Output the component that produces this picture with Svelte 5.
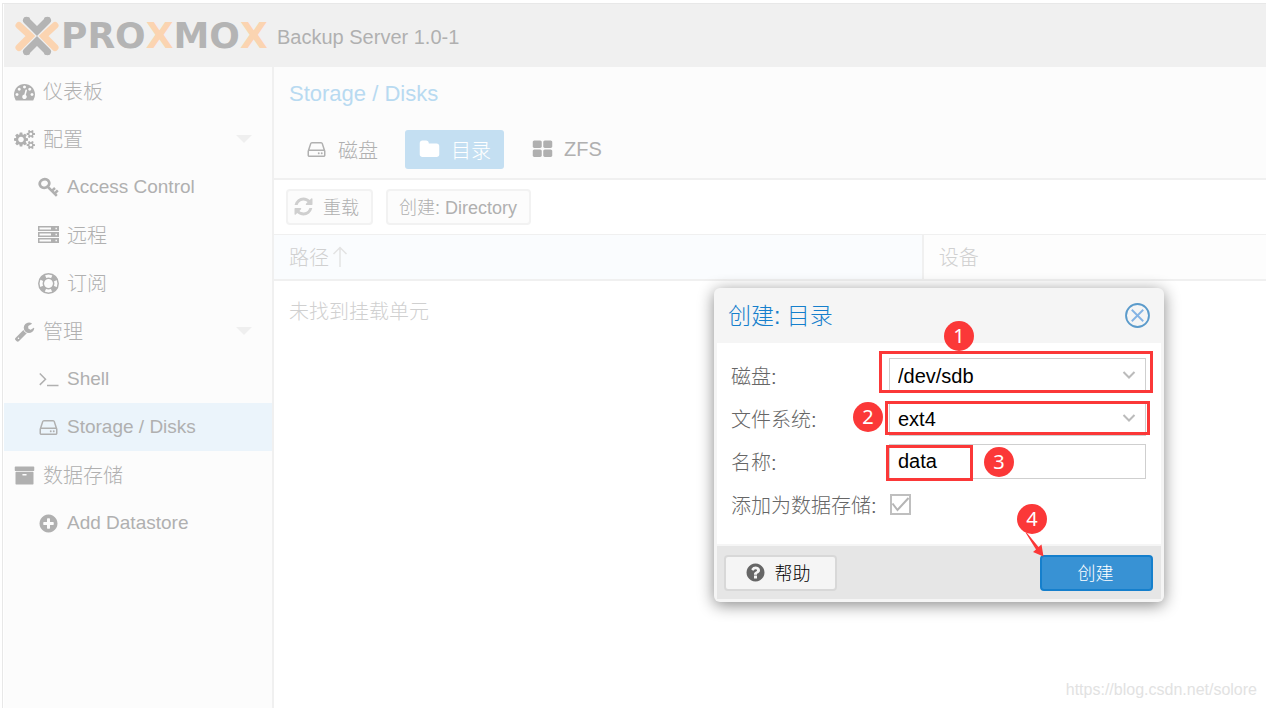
<script>
  const icons = {
    dashboard:
      'M384 1152q0-53-37.5-90.5t-90.5-37.5-90.5 37.5-37.5 90.5 37.5 90.5 90.5 37.5 90.5-37.5 37.5-90.5zm192-448q0-53-37.5-90.5t-90.5-37.5-90.5 37.5-37.5 90.5 37.5 90.5 90.5 37.5 90.5-37.5 37.5-90.5zm428 481l101-382q6-26-7.5-48.5t-38.5-29.5-48 6.5-30 39.5l-101 382q-60 5-107 43.5t-63 98.5q-20 77 20 146t117 89 146-20 89-117q16-60-6-117t-72-91zm660-33q0-53-37.5-90.5t-90.5-37.5-90.5 37.5-37.5 90.5 37.5 90.5 90.5 37.5 90.5-37.5 37.5-90.5zm-640-640q0-53-37.5-90.5t-90.5-37.5-90.5 37.5-37.5 90.5 37.5 90.5 90.5 37.5 90.5-37.5 37.5-90.5zm448 192q0-53-37.5-90.5t-90.5-37.5-90.5 37.5-37.5 90.5 37.5 90.5 90.5 37.5 90.5-37.5 37.5-90.5zm320 448q0 261-141 483-19 29-54 29h-1402q-35 0-54-29-141-221-141-483 0-182 71-348t191-286 286-191 348-71 348 71 286 191 191 286 71 348z',
    cogs: 'M896 896q0-106-75-181t-181-75-181 75-75 181 75 181 181 75 181-75 75-181zm768 512q0-52-38-90t-90-38-90 38-38 90q0 53 37.5 90.5t90.5 37.5 90.5-37.5 37.5-90.5zm0-1024q0-52-38-90t-90-38-90 38-38 90q0 53 37.5 90.5t90.5 37.5 90.5-37.5 37.5-90.5zm-384 421v185q0 10-7 19.5t-16 10.5l-155 24q-11 35-32 76 34 48 90 115 7 11 7 20 0 12-7 19-23 30-82.5 89.5t-78.5 59.5q-11 0-21-7l-115-90q-37 19-77 31-11 108-23 155-7 24-30 24h-186q-11 0-20-7.5t-10-17.5l-23-153q-34-10-75-31l-118 89q-7 7-20 7-11 0-21-8-144-133-144-160 0-9 7-19 10-14 41-53t47-61q-23-44-35-82l-152-24q-10-1-17-9.5t-7-19.5v-185q0-10 7-19.5t16-10.5l155-24q11-35 32-76-34-48-90-115-7-11-7-20 0-12 7-20 22-30 82-89t79-59q11 0 21 7l115 90q34-18 77-32 11-108 23-154 7-24 30-24h186q11 0 20 7.5t10 17.5l23 153q34 10 75 31l118-89q8-7 20-7 11 0 21 8 144 133 144 160 0 8-7 19-12 16-42 54t-45 60q23 48 34 82l152 23q10 2 17 10.5t7 19.5zm640 533v140q0 16-149 31-12 27-30 52 51 113 51 138 0 4-4 7-122 71-124 71-8 0-46-47t-52-68q-20 2-30 2t-30-2q-14 21-52 68t-46 47q-2 0-124-71-4-3-4-7 0-25 51-138-18-25-30-52-149-15-149-31v-140q0-16 149-31 13-29 30-52-51-113-51-138 0-4 4-7 4-2 35-20t59-34 30-16q8 0 46 46.500t52 67.500q20-2 30-2t30 2q51-71 92-112l6-2q4 0 124 70 4 3 4 7 0 25-51 138 17 23 30 52 149 15 149 31zm0-1024v140q0 16-149 31-12 27-30 52 51 113 51 138 0 4-4 7-122 71-124 71-8 0-46-47t-52-68q-20 2-30 2t-30-2q-14 21-52 68t-46 47q-2 0-124-71-4-3-4-7 0-25 51-138-18-25-30-52-149-15-149-31v-140q0-16 149-31 13-29 30-52-51-113-51-138 0-4 4-7 4-2 35-20t59-34 30-16q8 0 46 46.500t52 67.500q20-2 30-2t30 2q51-71 92-112l6-2q4 0 124 70 4 3 4 7 0 25-51 138 17 23 30 52 149 15 149 31z',
    wrench:
      'M448 1472q0-26-19-45t-45-19-45 19-19 45 19 45 45 19 45-19 19-45zm644-420l-682 682q-37 37-90 37-52 0-91-37l-106-108q-38-36-38-90 0-53 38-91l681-681q39 98 114.5 173.5t173.5 114.5zm634-435q0 39-23 106-47 134-164.5 217.5t-258.5 83.5q-185 0-316.5-131.5t-131.5-316.5 131.5-316.5 316.5-131.5q58 0 121.5 16.500t107.5 46.500q16 11 16 28t-16 28l-293 169v224l193 107q5-3 79-48.500t135.500-81 70.500-35.500q15 0 23.500 10t8.500 25z',
    hdd: 'M1168 1216q0 33-23.500 56.500t-56.500 23.500-56.500-23.500-23.500-56.500 23.500-56.500 56.500-23.500 56.500 23.500 23.500 56.500zm256 0q0 33-23.500 56.500t-56.500 23.500-56.500-23.500-23.500-56.500 23.500-56.500 56.500-23.500 56.500 23.500 23.500 56.500zm112 160v-320q0-13-9.500-22.500t-22.500-9.500h-1216q-13 0-22.500 9.500t-9.500 22.500v320q0 13 9.500 22.500t22.500 9.500h1216q13 0 22.500-9.500t9.500-22.500zm-1230-480h1180l-157-482q-4-13-16-21.500t-26-8.500h-782q-14 0-26 8.500t-16 21.500zm1358 160v320q0 66-47 113t-113 47h-1216q-66 0-113-47t-47-113v-320q0-25 16-75l197-606q17-53 63-86t101-33h782q55 0 101 33t63 86l197 606q16 50 16 75z',
    plus: 'M1344 960v-128q0-26-19-45t-45-19h-256v-256q0-26-19-45t-45-19h-128q-26 0-45 19t-19 45v256h-256q-26 0-45 19t-19 45v128q0 26 19 45t45 19h256v256q0 26 19 45t45 19h128q26 0 45-19t19-45v-256h256q26 0 45-19t19-45zm320-64q0 209-103 385.500t-279.500 279.500-385.500 103-385.500-103-279.500-279.500-103-385.500 103-385.500 279.500-279.500 385.500-103 385.500 103 279.500 279.500 103 385.500z',
    help: 'M1024 1376v-192q0-14-9-23t-23-9h-192q-14 0-23 9t-9 23v192q0 14 9 23t23 9h192q14 0 23-9t9-23zm256-672q0-88-55.500-163t-138.500-116-170-41q-243 0-371 213-15 24 8 42l132 100q7 6 19 6 16 0 25-12 53-68 86-92 34-24 86-24 48 0 85.500 26t37.500 59q0 38-20 61t-68 45q-63 28-115.500 86.500t-52.500 125.500v36q0 14 9 23t23 9h192q14 0 23-9t9-23q0-19 21.500-49.500t54.500-49.500q32-18 49-28.500t46-35 44.500-48 28-60.500 12.500-81zm384 192q0 209-103 385.500t-279.500 279.500-385.500 103-385.500-103-279.500-279.500-103-385.500 103-385.500 279.500-279.500 385.500-103 385.500 103 279.500 279.500 103 385.500z',
    refresh:
      'M1639 1056q0 5-1 7-64 268-268 434.500t-478 166.500q-146 0-282.500-55t-243.500-157l-129 129q-19 19-45 19t-45-19-19-45v-448q0-26 19-45t45-19h448q26 0 45 19t19 45-19 45l-137 137q71 66 161 102t187 36q134 0 250-65t186-179q11-17 53-117 8-23 30-23h192q13 0 22.500 9.500t9.500 22.500zm25-800v448q0 26-19 45t-45 19h-448q-26 0-45-19t-19-45 19-45l138-138q-148-137-349-137-134 0-250 65t-186 179q-11 17-53 117-8 23-30 23h-199q-13 0-22.500-9.500t-9.500-22.500v-7q65-268 270-434.500t480-166.500q146 0 284 55.500t245 156.500l130-129q19-19 45-19t45 19 19 45z',
    folder:
      'M1728 608v704q0 92-66 158t-158 66h-1216q-92 0-158-66t-66-158v-960q0-92 66-158t158-66h320q92 0 158 66t66 158v32h672q92 0 158 66t66 158z',
    archive:
      'M1088 832q0-26-19-45t-45-19h-256q-26 0-45 19t-19 45 19 45 45 19h256q26 0 45-19t19-45zm576-192v960q0 26-19 45t-45 19h-1408q-26 0-45-19t-19-45v-960q0-26 19-45t45-19h1408q26 0 45 19t19 45zm64-448v256q0 26-19 45t-45 19h-1536q-26 0-45-19t-19-45v-256q0-26 19-45t45-19h1536q26 0 45 19t19 45z',
    grid: 'M832 1024v384q0 52-38 90t-90 38h-512q-52 0-90-38t-38-90v-384q0-52 38-90t90-38h512q52 0 90 38t38 90zm0-768v384q0 52-38 90t-90 38h-512q-52 0-90-38t-38-90v-384q0-52 38-90t90-38h512q52 0 90 38t38 90zm896 768v384q0 52-38 90t-90 38h-512q-52 0-90-38t-38-90v-384q0-52 38-90t90-38h512q52 0 90 38t38 90zm0-768v384q0 52-38 90t-90 38h-512q-52 0-90-38t-38-90v-384q0-52 38-90t90-38h512q52 0 90 38t38 90z'
  };

  const nav = [
    { label: '仪表板', icon: 'dashboard' },
    { label: '配置', icon: 'cogs', open: true },
    { label: 'Access Control', icon: 'key', child: true, latin: true },
    { label: '远程', icon: 'server', child: true },
    { label: '订阅', icon: 'ring', child: true },
    { label: '管理', icon: 'wrench', open: true },
    { label: 'Shell', icon: 'terminal', child: true, latin: true },
    { label: 'Storage / Disks', icon: 'hdd', child: true, latin: true, active: true },
    { label: '数据存储', icon: 'archive' },
    { label: 'Add Datastore', icon: 'plus', child: true, latin: true }
  ];

  let disk = $state('/dev/sdb');
  let filesystem = $state('ext4');
  let name = $state('data');
  let addDatastore = $state(true);
</script>

{#snippet icon(id)}
  {#if id === 'key'}
    <svg class="icon" viewBox="0 0 21 21" aria-hidden="true" fill="none" stroke="currentColor">
      <ellipse cx="6.500" cy="6.500" rx="4.800" ry="4.300" stroke-width="2.800" transform="rotate(-20 6.500 6.500)" />
      <path d="M9.500 9.500 18.800 18.800M13.600 14.200 17 11M16.200 17 19.800 13.400" stroke-width="2.500" />
    </svg>
  {:else if id === 'server'}
    <svg class="icon" viewBox="0 0 21 21" aria-hidden="true">
      <path
        fill="currentColor"
        fill-rule="evenodd"
        d="M0 1h21v5H0zM1.500 2.500v2H13v-2zM17.500 2.800v1.400h1.400V2.800zM0 7h21v5H0zM1.500 8.500v2H13v-2zM17.500 8.800v1.400h1.400V8.800zM0 13h21v5H0zM1.500 14.500v2H13v-2zM17.500 14.800v1.400h1.400v-1.400z"
      />
    </svg>
  {:else if id === 'ring'}
    <svg class="icon" viewBox="0 0 21 21" aria-hidden="true" fill="none" stroke="currentColor">
      <circle cx="10.500" cy="10.500" r="9.700" stroke-width="1.500" />
      <circle cx="10.500" cy="10.500" r="5.200" stroke-width="1.500" />
      <circle cx="10.500" cy="10.500" r="7.400" stroke-width="5" stroke-dasharray="5.400 6.224" stroke-dashoffset="-3.112" />
    </svg>
  {:else if id === 'terminal'}
    <svg class="icon" viewBox="0 0 21 21" aria-hidden="true" fill="none" stroke="currentColor" stroke-width="1.500">
      <path d="M1.800 4.500 7.500 10.200 1.800 15.900M9 16.500h11.500" />
    </svg>
  {:else}
    <svg class="icon" viewBox={id === 'cogs' ? '0 0 1920 1792' : '0 0 1792 1792'} aria-hidden="true">
      <path fill="currentColor" d={icons[id]} />
    </svg>
  {/if}
{/snippet}

<div class="app">
  <header class="topbar">
    <svg class="emblem" viewBox="0 0 44 40" aria-hidden="true" fill="none" stroke-width="7" stroke-linecap="round">
      <path stroke="#fbd4b1" d="M4 9.500 15.500 20 4 31.500M40 9.500 28.500 20 40 31.500" />
      <path stroke="#f0f0f0" stroke-width="8.500" d="M11.500 4.500 22 15.500 32.500 4.500M11.500 35.500 22 24.500 32.500 35.500" />
      <path stroke="#b4b4b4" d="M11.500 4.500 22 15 32.500 4.500M11.500 35.500 22 25 32.500 35.500" />
      <path stroke="#b4b4b4" stroke-width="4" d="M10.500 3H13M31 3H33.500M10.500 37H13M31 37H33.500" />
    </svg>
    <span class="wordmark">PRO<b>X</b>MO<b>X</b></span>
    <span class="version">Backup Server 1.0-1</span>
  </header>

  <div class="columns">
    <nav class="sidebar">
      {#each nav as item}
        <a href="#nav" class:child={item.child} class:latin={item.latin} class:active={item.active}>
          {@render icon(item.icon)}
          <span>{item.label}</span>
          {#if item.open}<i class="caret"></i>{/if}
        </a>
      {/each}
    </nav>

    <main>
      <section class="heading">
        <h1>Storage / Disks</h1>
        <div class="tabs">
          <button class="tab">{@render icon('hdd')}磁盘</button>
          <button class="tab selected">{@render icon('folder')}目录</button>
          <button class="tab">{@render icon('grid')}ZFS</button>
        </div>
      </section>

      <div class="toolbar">
        <button class="tool reload">{@render icon('refresh')}重载</button>
        <button class="tool">创建: Directory</button>
      </div>

      <table>
        <thead>
          <tr>
            <th class="path">
              <span>路径</span><svg class="sort" viewBox="0 0 16 22" aria-hidden="true" fill="none" stroke="#e3e3e3" stroke-width="1.500">
                <path d="M8 21V2M1.500 8 8 1.500 14.500 8" />
              </svg>
            </th>
            <th>设备</th>
          </tr>
        </thead>
        <tbody>
          <tr><td colspan="2">未找到挂载单元</td></tr>
        </tbody>
      </table>
    </main>
  </div>

  <div class="dialog" role="dialog" aria-labelledby="dialog-title">
    <div class="dialog-head">
      <h2 id="dialog-title">创建: 目录</h2>
      <button class="close" aria-label="关闭">
        <svg viewBox="0 0 24 24" aria-hidden="true" fill="none">
          <circle cx="12" cy="12" r="11" stroke="#5b9bcb" stroke-width="1.800" />
          <path d="M6.500 6.500l11 11M17.500 6.500l-11 11" stroke="#84b3e4" stroke-width="1.800" />
        </svg>
      </button>
    </div>

    <form class="dialog-body">
      <label for="disk">磁盘:</label>
      <div class="combo">
        <select id="disk" bind:value={disk}><option>/dev/sdb</option></select>
        <svg viewBox="0 0 14 10" aria-hidden="true"><path d="M1.500 2 7 7.500 12.500 2" /></svg>
      </div>

      <label for="fs">文件系统:</label>
      <div class="combo">
        <select id="fs" bind:value={filesystem}><option>ext4</option></select>
        <svg viewBox="0 0 14 10" aria-hidden="true"><path d="M1.500 2 7 7.500 12.500 2" /></svg>
      </div>

      <label for="name">名称:</label>
      <input id="name" type="text" bind:value={name} />

      <label for="add">添加为数据存储:</label>
      <div class="check">
        <input id="add" type="checkbox" bind:checked={addDatastore} />
        {#if addDatastore}
          <svg viewBox="0 0 21 21" aria-hidden="true"><path d="M2.500 9.500 7.500 16 18.500 4" /></svg>
        {/if}
      </div>
    </form>

    <div class="dialog-foot">
      <button class="help">{@render icon('help')}帮助</button>
      <button class="create">创建</button>
    </div>

    <i class="mark mark-disk"></i>
    <i class="mark mark-fs"></i>
    <i class="mark mark-name"></i>
    <span class="step step-1">1</span>
    <span class="step step-2">2</span>
    <span class="step step-3">3</span>
    <span class="step step-4">4</span>
    <svg class="arrow" viewBox="0 0 20 26" aria-hidden="true">
      <path fill="#fb3838" d="M1.500 1.500 3 2 14.500 16 17.500 13.500 19.500 25.500 9 21 12 18.500z" />
    </svg>
  </div>

  <span class="watermark">https://blog.csdn.net/solore</span>
</div>

<style>
  :global(body) {
    background: #fff;
  }

  .app {
    --sans: 'Liberation Sans', 'Noto Sans CJK SC', sans-serif;
    position: relative;
    display: flex;
    flex-direction: column;
    box-sizing: border-box;
    min-height: 100vh;
    padding: 3px 0 0 2px;
    font-family: var(--sans);
    font-size: 20px;
    font-weight: 300;
    color: #b0b0b0;
    overflow: hidden;
  }

  button,
  select,
  input {
    font: inherit;
    margin: 0;
  }

  .icon {
    flex: none;
    width: 21px;
    height: 21px;
  }

  .topbar {
    display: flex;
    align-items: center;
    height: 63px;
    border: solid #e8e8e8;
    border-width: 1px 0 0 1px;
    box-shadow: inset 1px 0 #fff;
    padding-left: 12px;
    background: #f0f0f0;
  }

  .emblem {
    width: 44px;
    height: 40px;
  }

  .wordmark {
    margin-left: 2px;
    width: 206px;
    font: bold 36px/40px 'DejaVu Sans', sans-serif;
    color: #b4b4b4;
  }

  .wordmark b {
    color: #fbd4b1;
  }

  .version {
    margin-left: 10px;
    padding-top: 3px;
    white-space: nowrap;
  }

  .columns {
    flex: 1;
    display: flex;
    border-left: 1px solid #e8e8e8;
    padding-left: 1px;
  }

  .sidebar {
    flex: none;
    width: 268px;
    border-right: 2px solid #f0f0f0;
    background: #fcfcfc;
  }

  .sidebar a {
    display: flex;
    align-items: center;
    gap: 8px;
    height: 48px;
    padding: 0 20px 0 10px;
    color: inherit;
    text-decoration: none;
  }

  .sidebar a span {
    padding-bottom: 2px;
  }

  .sidebar a.latin span {
    padding-bottom: 0;
    font-size: 19px;
  }

  .sidebar a.child {
    padding-left: 34px;
  }

  .sidebar a.active {
    background: #ebf4fb;
  }

  .caret {
    margin-left: auto;
    border: 8px solid transparent;
    border-top-color: #efefef;
    border-bottom-width: 0;
  }

  main {
    flex: 1;
    min-width: 0;
  }

  .heading {
    padding: 12px 15px 9px;
    border-bottom: 2px solid #f0f0f0;
    background: #fcfcfc;
  }

  h1 {
    margin: 0;
    font-size: 22px;
    line-height: 30px;
    font-weight: 400;
    color: #b8daf1;
  }

  .tabs {
    display: flex;
    gap: 14px;
    margin-top: 21px;
  }

  .tab {
    display: flex;
    align-items: center;
    gap: 11px;
    height: 39px;
    padding: 0 13px 0 14px;
    border: 0;
    border-radius: 3px;
    background: none;
    color: #b0b0b0;
  }

  .tab:first-child {
    padding-left: 17px;
  }

  .tab.selected {
    background: #c4dff2;
    color: #fff;
  }

  .toolbar {
    display: flex;
    gap: 13px;
    padding: 9px 12px;
    border-bottom: 1px solid #f0f0f0;
  }

  .tool {
    display: flex;
    align-items: center;
    gap: 9px;
    height: 36px;
    padding: 0 12px 2px 11px;
    border: 2px solid #f2f2f2;
    border-radius: 4px;
    background: #fcfcfc;
    font-size: 18px;
    color: #b0b0b0;
  }

  .reload {
    padding-left: 5px;
  }

  .reload .icon {
    color: #cfcfcf;
  }

  table {
    width: 100%;
    border-collapse: separate;
    border-spacing: 0;
    color: #d0d0d0;
  }

  th {
    height: 42px;
    padding: 0 15px 2px;
    border-bottom: 2px solid #f0f0f0;
    background: #fdfdfd;
    font-weight: 300;
    text-align: left;
    vertical-align: middle;
  }

  th.path {
    width: 65.5%;
    box-sizing: border-box;
    height: 46px;
    border-right: 2px solid #f0f0f0;
    background: #fafcfe;
  }

  .sort {
    width: 16px;
    height: 22px;
    margin-left: 3px;
    vertical-align: -3px;
  }

  td {
    height: 58px;
    padding: 0 15px 2px;
  }

  .dialog {
    position: absolute;
    left: 714px;
    top: 288px;
    width: 450px;
    box-sizing: border-box;
    padding: 0 3px 3px;
    border-radius: 6px;
    background: #f5f5f5;
    box-shadow: 0 3px 16px #888;
    color: #666;
  }

  .dialog-head {
    display: flex;
    align-items: center;
    justify-content: space-between;
    height: 55px;
    padding: 0 11px;
  }

  h2 {
    margin: 0;
    padding-bottom: 4px;
    font-size: 23px;
    font-weight: 300;
    color: #157fcc;
  }

  .close {
    width: 25px;
    height: 25px;
    padding: 0;
    border: 0;
    background: none;
  }

  .close svg {
    display: block;
  }

  .dialog-body {
    display: grid;
    grid-template-columns: 158px 1fr;
    grid-auto-rows: 35px;
    row-gap: 8px;
    align-items: center;
    padding: 15px 15px 22px 14px;
    background: #fff;
  }

  label {
    white-space: nowrap;
  }

  .combo {
    position: relative;
  }

  select,
  input[type='text'] {
    display: block;
    width: 100%;
    height: 35px;
    box-sizing: border-box;
    padding: 0 8px;
    border: 1px solid #cfcfcf;
    border-radius: 0;
    appearance: none;
    background: #fff;
    color: #000;
  }

  .combo svg {
    position: absolute;
    right: 10px;
    top: 12px;
    width: 14px;
    height: 10px;
    fill: none;
    stroke: #bbb;
    stroke-width: 2;
  }

  .check {
    position: relative;
    width: 21px;
    height: 21px;
    margin-left: 1px;
  }

  .check input {
    display: block;
    width: 21px;
    height: 21px;
    border: 2px solid #bfbfbf;
    appearance: none;
    box-sizing: border-box;
  }

  .check svg {
    position: absolute;
    inset: 0;
    fill: none;
    stroke: #b5b5b5;
    stroke-width: 2;
    pointer-events: none;
  }

  .dialog-foot {
    display: flex;
    justify-content: space-between;
    padding: 9px 8px 8px 7px;
    margin-top: 2px;
    background: #e6e6e6;
  }

  .dialog-foot button {
    display: flex;
    align-items: center;
    justify-content: center;
    gap: 9px;
    width: 113px;
    height: 36px;
    padding: 0 6px 2px 0;
    border: 2px solid #d8d8d8;
    border-radius: 4px;
    background: #f5f5f5;
    font-size: 18px;
    color: #000;
  }

  .dialog-foot .icon {
    color: #666;
  }

  .dialog-foot .create {
    padding-right: 2px;
    border-color: #157fcc;
    background: #3892d4;
    color: #fff;
  }

  .mark {
    position: absolute;
    box-sizing: border-box;
    border: 3px solid #fb3838;
    pointer-events: none;
  }

  .mark-disk {
    left: 165px;
    top: 63px;
    width: 274px;
    height: 42px;
  }

  .mark-fs {
    left: 171px;
    top: 113px;
    width: 265px;
    height: 34px;
  }

  .mark-name {
    left: 172px;
    top: 157px;
    width: 87px;
    height: 36px;
  }

  .step {
    position: absolute;
    width: 30px;
    height: 30px;
    border-radius: 50%;
    background: #fb3838;
    color: #fff;
    font: 20px/29px 'Noto Sans', sans-serif;
    text-align: center;
  }

  .step-1 {
    left: 230px;
    top: 33px;
  }

  .step-2 {
    left: 139px;
    top: 114px;
  }

  .step-3 {
    left: 270px;
    top: 159px;
  }

  .step-4 {
    left: 303px;
    top: 216px;
  }

  .arrow {
    position: absolute;
    left: 310px;
    top: 243px;
    width: 20px;
    height: 26px;
  }

  .watermark {
    position: absolute;
    right: 9px;
    bottom: 8px;
    font-size: 16px;
    line-height: 20px;
    color: #e2e2e2;
  }
</style>
